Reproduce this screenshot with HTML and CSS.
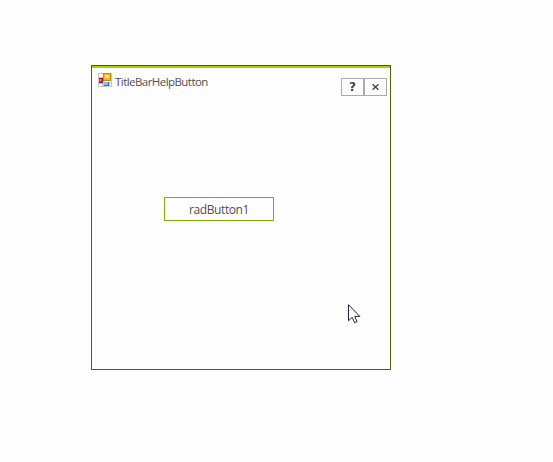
FILE: index.html
```html
<!DOCTYPE html>
<html lang="en">
<head>
<meta charset="utf-8">
<title>TitleBarHelpButton</title>
<link rel="stylesheet" href="styles.css">
</head>
<body>
<main class="window">
  <header class="titlebar">
    <svg class="app-icon" width="14" height="14" viewBox="0 0 14 14" shape-rendering="crispEdges">
      <path fill="#c6c6c6" d="M0 0h14v14H0z"/>
      <path fill="#fff" d="M1 1h4v3H1zM1 11h3v2H1zM12 10h1v3h-1z"/>
      <path fill="#c08a10" d="M5 0h8v8H5z"/>
      <path fill="#f3b91e" d="M6 1h6v6H6z"/>
      <path fill="#ffe385" d="M7 2h4v3H7z"/>
      <path fill="#9b1a1a" d="M1 5h4v5H1z"/>
      <path fill="#d13a25" d="M1 6h3v3H1z"/>
      <path fill="#f5a398" d="M2 6h1v2H2z"/>
      <path fill="#fff" d="M5 8h8v1H5z"/>
      <path fill="#3b70cf" d="M6 9h5v4H6z"/>
      <path fill="#8ab8f6" d="M6 9h4v3H6z"/>
    </svg>
    <span class="title">TitleBarHelpButton</span>
    <div class="controls">
      <button class="control" aria-label="Help"><span class="help">?</span></button>
      <button class="control" aria-label="Close">
        <svg width="7" height="6" viewBox="0 0 7 6"><path d="M.6 .3 6.4 5.7M6.4 .3.6 5.7" stroke="#444" stroke-width="1.4"/></svg>
      </button>
    </div>
  </header>
  <button class="rad-button">radButton1</button>
</main>
<svg class="cursor" width="13" height="20" viewBox="0 0 13 20">
  <path d="M.5 .7v16.1l3.7-3.5 2.5 5.4 2.4-1.1-2.4-5.2h5.1z" fill="#fff" stroke="#20203c"/>
</svg>
</body>
</html>
```
FILE: styles.css
```css
body {
  margin: 0;
  padding: 65px 0 0 91px;
  background: #fdfdfd;
  font-family: "Open Sans", "Noto Sans", sans-serif;
  color: #505050;
}
.window {
  box-sizing: border-box;
  width: 300px;
  height: 305px;
  border: 1px solid #526000;
  background: #fdfdfd;
}
.titlebar {
  box-sizing: border-box;
  display: flex;
  align-items: flex-start;
  height: 32px;
  padding: 5px 3px 0 6px;
  border-top: 2px solid #a4d300;
}
.title {
  margin: 2px 0 0 3px;
  font-size: 11.5px;
  line-height: 14px;
  letter-spacing: -0.55px;
}
.app-icon { display: block; }
.controls {
  display: flex;
  margin: 5px 0 0 auto;
}
.control {
  box-sizing: border-box;
  display: flex;
  align-items: center;
  justify-content: center;
  width: 23px;
  height: 18px;
  padding: 0;
  border: 1px solid #ababab;
  background: #fdfdfd;
  color: #444;
}
.help {
  font: bold 12px/14px "DejaVu Sans", sans-serif;
}
.rad-button {
  box-sizing: border-box;
  display: block;
  width: 110px;
  height: 24px;
  margin: 99px 0 0 72px;
  padding: 1px 0 0;
  border: 1px solid #80b000;
  background: #fdfdfd;
  color: #505050;
  font: 12px/16px "Open Sans", "Noto Sans", sans-serif;
  letter-spacing: -0.4px;
}
.cursor {
  position: absolute;
  left: 348px;
  top: 304px;
}
```
